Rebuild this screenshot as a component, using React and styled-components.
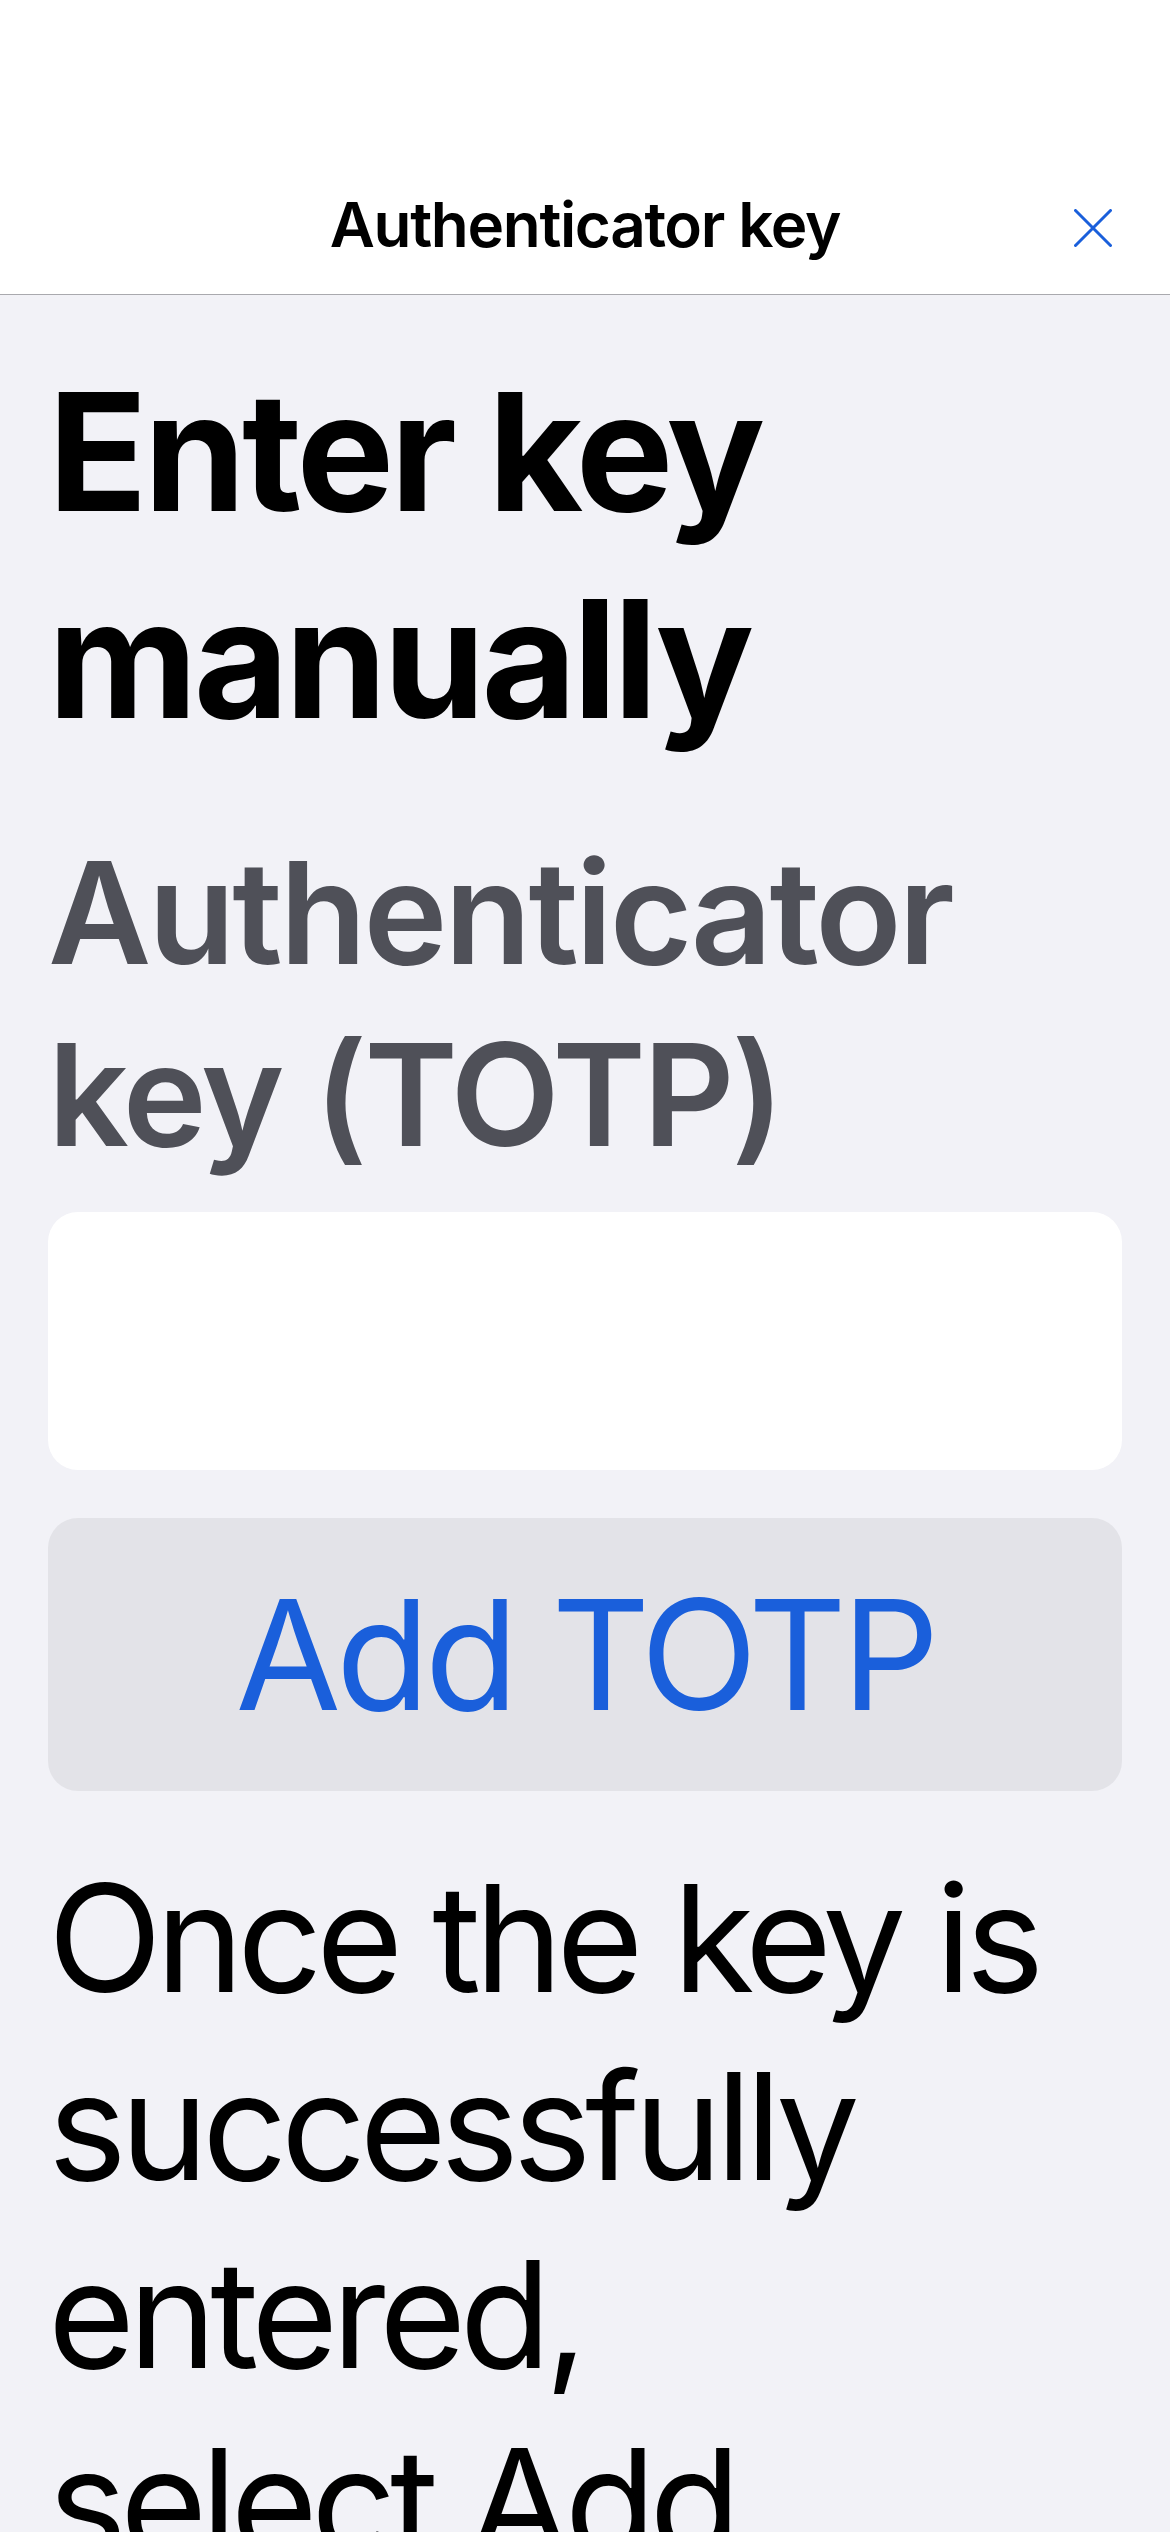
import styled, { createGlobalStyle } from 'styled-components';

const GlobalStyle = createGlobalStyle`
  html, body {
    margin: 0;
    padding: 0;
    background-color: #f2f2f7;
  }
  body {
    font-family: Inter, "Noto Sans", "Liberation Sans", sans-serif;
    -webkit-font-smoothing: antialiased;
  }
`;

const Page = styled.div`
  min-height: 2532px;
  background-color: #f2f2f7;
`;

const NavBar = styled.header`
  background-color: #fff;
  padding: 180px 58px 24px;
  border-bottom: 1px solid #a9a9ae;
`;

const NavRow = styled.div`
  position: relative;
  height: 90px;
  display: flex;
  align-items: center;
  justify-content: center;
`;

const NavTitle = styled.h1`
  margin: 0;
  font-size: 62px;
  line-height: 90px;
  font-weight: 600;
  letter-spacing: -1.35px;
  color: #000;
`;

const CloseButton = styled.button`
  position: absolute;
  right: 0;
  top: 29px;
  width: 38px;
  height: 38px;
  padding: 0;
  border: none;
  background: none;
  display: flex;
  color: #1a5fdb;
`;

const Content = styled.main`
  padding: 53px 48px 0;
  display: flex;
  flex-direction: column;
`;

const Heading = styled.h2`
  margin: 0;
  font-size: 164px;
  line-height: 207px;
  font-weight: 700;
  letter-spacing: -3.9px;
  color: #000;
`;

const Label = styled.label`
  margin-top: 59px;
  font-size: 142px;
  line-height: 182px;
  font-weight: 600;
  letter-spacing: -3px;
  color: #4f5058;
`;

const KeyInput = styled.input`
  margin-top: 27px;
  height: 258px;
  box-sizing: border-box;
  border: none;
  border-radius: 30px;
  background-color: #fff;
  padding: 0 36px;
  font-family: inherit;
  font-size: 100px;
  outline: none;
`;

const ActionButton = styled.button`
  margin-top: 48px;
  height: 273px;
  border: none;
  border-radius: 30px;
  background-color: #e3e3e8;
  color: #1a5fdb;
  font-family: inherit;
  font-size: 153px;
  font-weight: 400;
  letter-spacing: -5px;
  line-height: 1;
`;

const Note = styled.p`
  margin: 53px 0 0;
  font-size: 149px;
  line-height: 188px;
  font-weight: 400;
  letter-spacing: -6.3px;
  color: #000;
`;

const CloseIcon = () => (
  <svg width="38" height="38" viewBox="0 0 38 38" fill="none">
    <path d="M1.5 1.5L36.5 36.5M36.5 1.5L1.5 36.5" stroke="currentColor" strokeWidth="3" strokeLinecap="round" />
  </svg>
);

const App = () => {
  return (
    <Page>
      <GlobalStyle />
      <NavBar>
        <NavRow>
          <NavTitle>Authenticator key</NavTitle>
          <CloseButton aria-label="Close">
            <CloseIcon />
          </CloseButton>
        </NavRow>
      </NavBar>
      <Content>
        <Heading>Enter key manually</Heading>
        <Label htmlFor="totp">Authenticator key (TOTP)</Label>
        <KeyInput id="totp" type="text" />
        <ActionButton>Add TOTP</ActionButton>
        <Note>Once the key is successfully entered, select{'\u00a0'}Add TOTP.</Note>
      </Content>
    </Page>
  );
};

export default App;
